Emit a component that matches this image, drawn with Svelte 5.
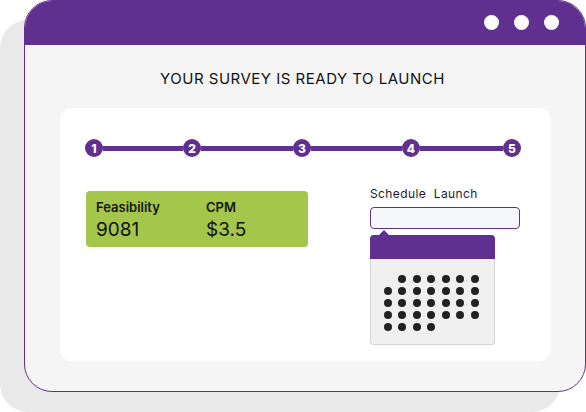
<script lang="ts">
	const steps = [
		{ n: 1, gap: 80 },
		{ n: 2, gap: 92 },
		{ n: 3, gap: 91 },
		{ n: 4, gap: 83 },
		{ n: 5, gap: 0 }
	];
	const rows = [
		[0, 1, 1, 1, 1, 1, 1],
		[1, 1, 1, 1, 1, 1, 1],
		[1, 1, 1, 1, 1, 1, 1],
		[1, 1, 1, 1, 1, 1, 1],
		[1, 1, 1, 1, 0, 0, 0]
	];
</script>

<div class="page">
	<div class="shadow"></div>
	<div class="window">
		<header class="titlebar">
			<span class="dot"></span>
			<span class="dot"></span>
			<span class="dot"></span>
		</header>
		<div class="body">
			<h1>YOUR SURVEY IS READY TO LAUNCH</h1>
			<div class="card">
				<div class="stepper">
					{#each steps as step}
						<span class="step">{step.n}</span>
						{#if step.gap}
							<span class="line" style="width: {step.gap}px"></span>
						{/if}
					{/each}
				</div>
				<div class="lower">
					<div class="stats">
						<div class="stat feas">
							<span class="name">Feasibility</span>
							<span class="value">9081</span>
						</div>
						<div class="stat">
							<span class="name">CPM</span>
							<span class="value">$3.5</span>
						</div>
					</div>
					<div class="schedule">
						<div class="label">Schedule&nbsp; Launch</div>
						<div class="input"></div>
						<div class="calendar">
							<div class="cal-head"></div>
							<div class="cal-grid">
								{#each rows as row}
									{#each row as on}
										<span class="cal-day" class:on></span>
									{/each}
								{/each}
							</div>
						</div>
					</div>
				</div>
			</div>
		</div>
	</div>
</div>

<style>
	:global(body) {
		margin: 0;
		background: #fff;
	}

	.page {
		position: relative;
		width: 586px;
		height: 412px;
		overflow: hidden;
		font-family: Inter, 'Open Sans', sans-serif;
		color: #111;
	}

	.shadow {
		position: absolute;
		left: 0;
		top: 20px;
		width: 560px;
		height: 392px;
		border-radius: 28px;
		background: #e9e9e9;
	}

	.window {
		position: relative;
		box-sizing: border-box;
		width: 562px;
		height: 392px;
		margin-left: 24px;
		border-radius: 28px;
		border: 1px solid #5f3090;
		background: #f5f5f6;
		overflow: hidden;
	}

	.titlebar {
		box-sizing: border-box;
		height: 45px;
		margin: -1px -1px 0;
		padding-right: 27px;
		display: flex;
		justify-content: flex-end;
		align-items: center;
		gap: 15px;
		background: #5f3090;
	}

	.dot {
		width: 15px;
		height: 15px;
		border-radius: 50%;
		background: #fff;
	}

	.body {
		display: flex;
		flex-direction: column;
		padding-left: 35px;
	}

	h1 {
		margin: 0;
		height: 63px;
		width: 485px;
		line-height: 67px;
		font-size: 15px;
		font-weight: 400;
		letter-spacing: 0.5px;
		text-align: center;
		color: #111;
	}

	.card {
		box-sizing: border-box;
		width: 491px;
		height: 253px;
		padding: 31px 0 0 25px;
		border-radius: 12px;
		background: #fff;
	}

	.stepper {
		display: flex;
		align-items: center;
	}

	.step {
		width: 18px;
		height: 18px;
		flex: none;
		border-radius: 50%;
		display: flex;
		align-items: center;
		justify-content: center;
		background: #5f3090;
		color: #fff;
		font-size: 12px;
		font-weight: 800;
	}

	.line {
		height: 5px;
		flex: none;
		background: #5f3090;
	}

	.lower {
		display: flex;
		margin-top: 27px;
		padding-left: 1px;
	}

	.stats {
		box-sizing: border-box;
		width: 222px;
		height: 56px;
		margin-top: 7px;
		padding: 8px 10px 0;
		display: flex;
		border-radius: 4px;
		background: #a4c64a;
	}

	.stat {
		display: flex;
		flex-direction: column;
	}

	.feas {
		width: 110px;
	}

	.name {
		font-size: 13px;
		font-weight: 600;
		line-height: 16px;
		color: #161616;
	}

	.value {
		margin-top: 3px;
		font-size: 19px;
		line-height: 23px;
		font-weight: 400;
		color: #111;
	}

	.schedule {
		margin-left: 62px;
		width: 150px;
	}

	.label {
		margin-top: 3px;
		font-size: 12px;
		line-height: 14px;
		letter-spacing: 0.4px;
		color: #1c1c1c;
	}

	.input {
		box-sizing: border-box;
		height: 22px;
		margin-top: 6px;
		border: 1px solid #5f3090;
		border-radius: 4px;
		background: #f6f7fb;
	}

	.calendar {
		position: relative;
		box-sizing: border-box;
		width: 125px;
		height: 110px;
		margin-top: 6px;
		border: 1px solid #d4d4d4;
		border-top: 0;
		border-radius: 4px;
		background: #f0f0f0;
	}

	.calendar::before {
		content: '';
		position: absolute;
		left: 8px;
		top: -5px;
		border: 5px solid transparent;
		border-top: 0;
		border-bottom-color: #5f3090;
	}

	.cal-head {
		height: 24px;
		margin: 0 -1px;
		border-radius: 4px 4px 0 0;
		background: #5f3090;
	}

	.cal-grid {
		display: grid;
		grid-template-columns: repeat(7, 8px);
		grid-auto-rows: 8px;
		column-gap: 6.6px;
		row-gap: 4px;
		padding: 16px 0 0 12.5px;
	}

	.cal-day {
		border-radius: 50%;
	}

	.cal-day.on {
		background: #222;
	}
</style>
